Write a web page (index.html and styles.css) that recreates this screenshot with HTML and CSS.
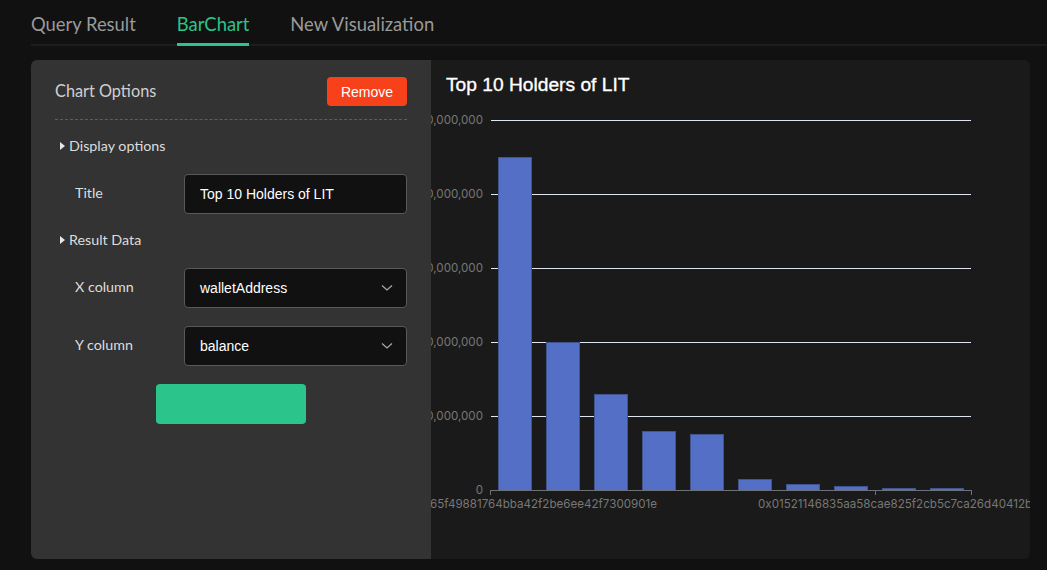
FILE: index.html
```html
<!DOCTYPE html>
<html>
<head>
<meta charset="utf-8">
<link rel="stylesheet" href="styles.css">
</head>
<body>
<nav class="tabs">
  <div class="tab">Query Result</div>
  <div class="tab active">BarChart</div>
  <div class="tab">New Visualization</div>
</nav>
<main class="card">
  <section class="panel">
    <div class="panel-head">
      <h2 class="panel-title">Chart Options</h2>
      <button class="btn-remove">Remove</button>
    </div>
    <div class="divider"></div>
    <div class="section-title"><span class="caret"></span>Display options</div>
    <div class="field">
      <label class="field-label">Title</label>
      <div class="input">Top 10 Holders of LIT</div>
    </div>
    <div class="section-title second"><span class="caret"></span>Result Data</div>
    <div class="field">
      <label class="field-label">X column</label>
      <div class="input select">walletAddress
        <svg class="chev" width="12" height="8" viewBox="0 0 12 8"><path d="M1 1.5 L6 6 L11 1.5" fill="none" stroke="#aaa" stroke-width="1.2"/></svg>
      </div>
    </div>
    <div class="field">
      <label class="field-label">Y column</label>
      <div class="input select">balance
        <svg class="chev" width="12" height="8" viewBox="0 0 12 8"><path d="M1 1.5 L6 6 L11 1.5" fill="none" stroke="#aaa" stroke-width="1.2"/></svg>
      </div>
    </div>
    <div class="actions"><button class="btn-save"></button></div>
  </section>
  <section class="chart">
    <svg class="chart-svg" width="599" height="499" viewBox="0 0 599 499">
      <text class="chart-title" x="15" y="31">Top 10 Holders of LIT</text>
      <g class="grid">
        <line x1="60" y1="60.5" x2="540" y2="60.5"/>
        <line x1="60" y1="134.5" x2="540" y2="134.5"/>
        <line x1="60" y1="208.5" x2="540" y2="208.5"/>
        <line x1="60" y1="282.5" x2="540" y2="282.5"/>
        <line x1="60" y1="356.5" x2="540" y2="356.5"/>
      </g>
      <g class="ylab">
        <text x="52" y="64">250,000,000</text>
        <text x="52" y="138">200,000,000</text>
        <text x="52" y="212">150,000,000</text>
        <text x="52" y="286">100,000,000</text>
        <text x="52" y="360">50,000,000</text>
        <text x="52" y="434">0</text>
      </g>
      <g class="bars">
        <rect x="67.5" y="97.5" width="33" height="333"/>
        <rect x="115.5" y="282.5" width="33" height="148"/>
        <rect x="163.5" y="334.5" width="33" height="96"/>
        <rect x="211.5" y="371.5" width="33" height="59"/>
        <rect x="259.5" y="374.5" width="33" height="56"/>
        <rect x="307.5" y="419.5" width="33" height="11"/>
        <rect x="355.5" y="424.5" width="33" height="6"/>
        <rect x="403.5" y="426.5" width="33" height="4"/>
        <rect x="451.5" y="428.5" width="33" height="2"/>
        <rect x="499.5" y="428.5" width="33" height="2"/>
      </g>
      <g class="axis">
        <line x1="59" y1="430.5" x2="540" y2="430.5"/>
        <line x1="59.5" y1="430" x2="59.5" y2="435"/>
        <line x1="444.5" y1="430" x2="444.5" y2="435"/>
        <line x1="540.5" y1="430" x2="540.5" y2="435"/>
      </g>
      <g class="xlab">
        <text x="226" y="448" text-anchor="end">0x3c5e4b65f49881764bba42f2be6ee42f7300901e</text>
        <text x="327" y="448" text-anchor="start">0x01521146835aa58cae825f2cb5c7ca26d40412b3</text>
      </g>
    </svg>
  </section>
</main>
</body>
</html>
```

FILE: styles.css
```css
* { box-sizing: border-box; }
html, body { margin: 0; padding: 0; }
body {
  background: #111111;
  width: 1047px;
  height: 570px;
  overflow: hidden;
  font-family: Lato, "Noto Sans", sans-serif;
}
.tabs {
  display: flex;
  margin-left: 31px;
  height: 46px;
  border-bottom: 2px solid #1d1d1d;
  align-items: flex-end;
}
.tab {
  font-size: 18.4px;
  color: #9a9a9a;
  height: 44px;
  line-height: 44px;
  margin-right: 41px;
  border-bottom: 2px solid transparent;
  margin-bottom: -2px;
  position: relative;
}
.tab.active {
  color: #2bc48a;
  border-bottom: 3px solid #2bc48a;
}
.card {
  display: flex;
  margin: 14px 17px 0 31px;
  height: 499px;
}
.panel {
  width: 400px;
  flex: none;
  background: #333333;
  border-radius: 6px 0 0 6px;
  padding: 17px 24px 0 24px;
  position: relative;
  z-index: 1;
}
.panel-head {
  display: flex;
  justify-content: space-between;
  align-items: center;
  height: 29px;
}
.panel-title {
  margin: 0;
  font-weight: normal;
  font-size: 16.3px;
  line-height: 20px;
  margin-top: -2px;
  color: #cfcfcf;
}
.btn-remove {
  width: 80px;
  height: 29px;
  background: #f6411b;
  border: none;
  border-radius: 4px;
  color: #ffffff;
  font-family: "Liberation Sans", Arial, sans-serif;
  font-size: 14px;
  padding: 0;
}
.divider {
  margin-top: 13px;
  border-top: 1px dashed #5e5e5e;
}
.section-title {
  margin-top: 16px;
  height: 20px;
  line-height: 20px;
  font-size: 14.3px;
  color: #dddddd;
  display: flex;
  align-items: center;
  padding-left: 5px;
}
.section-title.second { margin-top: 16px; }
.caret {
  width: 0; height: 0;
  border-top: 4.5px solid transparent;
  border-bottom: 4.5px solid transparent;
  border-left: 5px solid #e6e6e6;
  margin-right: 4px;
}
.field {
  display: flex;
  align-items: center;
  margin-top: 18px;
  padding-left: 20px;
}
.field-label {
  width: 109px;
  font-size: 14.3px;
  color: #dddddd;
  margin-top: -3px;
}
.input {
  flex: 1;
  height: 40px;
  background: #111111;
  border: 1px solid #595959;
  border-radius: 4px;
  padding: 0 15px;
  display: flex;
  align-items: center;
  justify-content: space-between;
  font-family: "Liberation Sans", Arial, sans-serif;
  font-size: 14px;
  color: #ffffff;
}
.select { padding-right: 13px; }
.chev { display: block; }
.actions {
  display: flex;
  justify-content: center;
  margin-top: 18px;
}
.btn-save {
  width: 150px;
  height: 40px;
  background: #2bc48a;
  border: none;
  border-radius: 4px;
}
.chart {
  flex: 1;
  background: #1a1a1a;
  border-radius: 0 6px 6px 0;
  overflow: hidden;
}
.chart-svg {
  display: block;
  overflow: hidden;
  font-family: Inter, "Noto Sans", sans-serif;
}
.chart-title {
  font-family: "Liberation Sans", Arial, sans-serif;
  font-weight: normal;
  font-size: 19.2px;
  fill: #ffffff;
  stroke: #ffffff;
  stroke-width: 0.35px;
}
.grid line { stroke: #e0e6f1; stroke-width: 1; }
.ylab text { font-size: 11.6px; fill: #777777; text-anchor: end; }
.bars rect { fill: #5470c6; stroke: #3f558f; stroke-width: 1; }
.axis line { stroke: #6e7079; stroke-width: 1; }
.xlab text { font-size: 11.6px; fill: #777777; }
```
